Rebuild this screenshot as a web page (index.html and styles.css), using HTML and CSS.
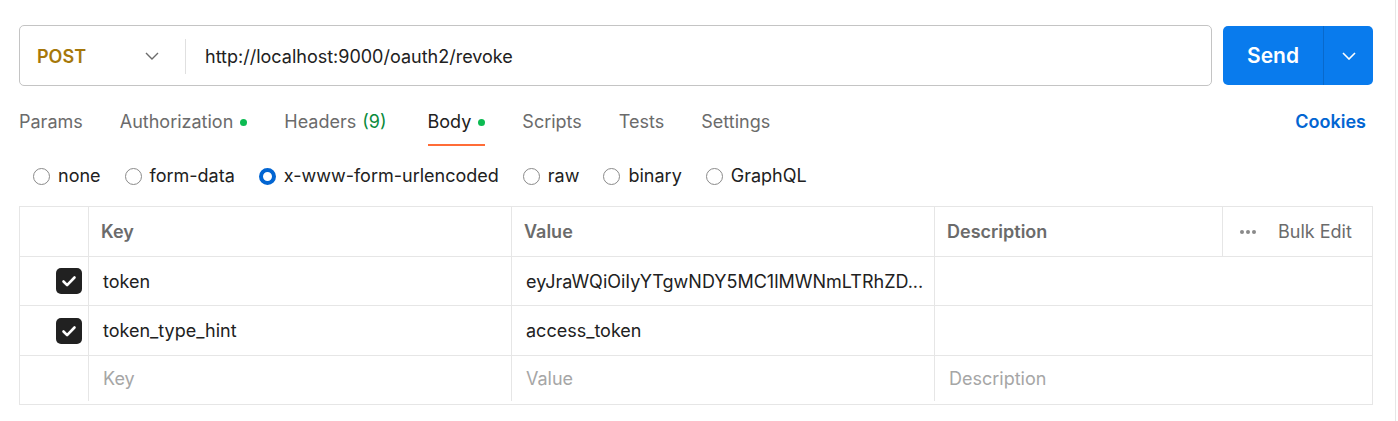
FILE: index.html
```html
<!DOCTYPE html>
<html lang="en">
<head>
<meta charset="utf-8">
<title>Request</title>
<link rel="stylesheet" href="styles.css">
</head>
<body>
<div class="page">
  <div class="request-bar">
    <div class="url-box">
      <div class="method">
        <span class="method-name">POST</span>
        <svg class="chev" width="14" height="8" viewBox="0 0 14 8"><path d="M1 1l6 6 6-6" fill="none" stroke="#6b6b6b" stroke-width="1.4"/></svg>
      </div>
      <div class="url">http://localhost:9000/oauth2/revoke</div>
    </div>
    <div class="send">
      <span class="send-label">Send</span>
      <span class="send-more"><svg width="14" height="8" viewBox="0 0 14 8"><path d="M1 1l6 6 6-6" fill="none" stroke="#fff" stroke-width="1.6"/></svg></span>
    </div>
  </div>

  <div class="tabs">
    <div class="tab">Params</div>
    <div class="tab">Authorization<span class="dot"></span></div>
    <div class="tab wide">Headers <span class="count">(9)</span></div>
    <div class="tab active">Body<span class="dot"></span></div>
    <div class="tab">Scripts</div>
    <div class="tab">Tests</div>
    <div class="tab">Settings</div>
    <div class="cookies">Cookies</div>
  </div>

  <div class="radios">
    <label class="radio"><span class="circle"></span>none</label>
    <label class="radio"><span class="circle"></span>form-data</label>
    <label class="radio"><span class="circle on"></span>x-www-form-urlencoded</label>
    <label class="radio"><span class="circle"></span>raw</label>
    <label class="radio"><span class="circle"></span>binary</label>
    <label class="radio"><span class="circle"></span>GraphQL</label>
  </div>

  <div class="table">
    <div class="row head">
      <div class="cell"></div>
      <div class="cell th">Key</div>
      <div class="cell th">Value</div>
      <div class="cell th">Description</div>
      <div class="cell bulk"><span class="dots"><i></i><i></i><i></i></span>Bulk Edit</div>
    </div>
    <div class="row r1">
      <div class="cell check"><span class="box"><svg width="20" height="20" viewBox="0 0 20 20"><path d="M4.5 10.5l3.6 3.6 7.4-7.6" fill="none" stroke="#fff" stroke-width="2.6" stroke-linecap="round" stroke-linejoin="round"/></svg></span></div>
      <div class="cell td">token</div>
      <div class="cell td">eyJraWQiOiIyYTgwNDY5MC1lMWNmLTRhZD...</div>
      <div class="cell td"></div>
    </div>
    <div class="row r2">
      <div class="cell check"><span class="box"><svg width="20" height="20" viewBox="0 0 20 20"><path d="M4.5 10.5l3.6 3.6 7.4-7.6" fill="none" stroke="#fff" stroke-width="2.6" stroke-linecap="round" stroke-linejoin="round"/></svg></span></div>
      <div class="cell td">token_type_hint</div>
      <div class="cell td">access_token</div>
      <div class="cell td"></div>
    </div>
    <div class="row r3">
      <div class="cell"></div>
      <div class="cell td ph">Key</div>
      <div class="cell td ph">Value</div>
      <div class="cell td ph">Description</div>
    </div>
  </div>
</div>
</body>
</html>
```

FILE: styles.css
```css
* { box-sizing: border-box; }
html, body { margin: 0; padding: 0; background: #fff; }
body {
  font-family: Inter, "Noto Sans", sans-serif;
  color: #212121;
  font-size: 18px;
}
.page {
  width: 1396px;
  height: 421px;
  border-right: 1px solid #e6e6e6;
  padding: 25px 22px 0 19px;
}
.request-bar {
  display: flex;
  gap: 11px;
  align-items: flex-start;
}
.url-box {
  flex: 1;
  height: 61px;
  border: 1px solid #c4c4c4;
  border-radius: 5px;
  display: flex;
  align-items: center;
  padding-top: 1px;
}
.method {
  width: 166px;
  height: 35px;
  border-right: 1px solid #e0e0e0;
  display: flex;
  align-items: center;
  justify-content: space-between;
  padding: 0 26px 0 17px;
}
.method-name {
  color: #a6780a;
  font-weight: 600;
}
.chev { display: block; }
.url {
  padding-left: 19px;
  color: #212121;
}
.send {
  width: 150px;
  height: 59px;
  margin-top: 1px;
  background: #097bed;
  border-radius: 5px;
  display: flex;
  color: #fff;
}
.send-label {
  width: 101px;
  display: flex;
  align-items: center;
  justify-content: center;
  font-weight: 600;
  font-size: 21px;
  border-right: 1px solid #0869cc;
}
.send-more {
  flex: 1;
  display: flex;
  align-items: center;
  justify-content: center;
}
.send-more svg { display: block; }

.tabs {
  display: flex;
  margin-top: 18px;
  gap: 37px;
  align-items: flex-start;
}
.tab {
  padding: 6px 0 10px;
  line-height: 24px;
  color: #6b6b6b;
  border-bottom: 2px solid transparent;
  display: flex;
  align-items: center;
  white-space: nowrap;
}
.tab.wide { margin-right: 4px; }
.tab.active {
  color: #212121;
  border-bottom-color: #ff6c37;
}
.count { color: #0a8a3c; margin-left: 6px; }
.dot {
  width: 7px;
  height: 7px;
  border-radius: 50%;
  background: #0cbb52;
  margin-left: 7px;
}
.cookies {
  margin-left: auto;
  padding: 6px 7px 0 0;
  line-height: 24px;
  color: #0265d2;
  font-weight: 600;
}

.radios {
  display: flex;
  gap: 24px;
  margin-top: 18px;
  padding-left: 14px;
  line-height: 24px;
}
.radio {
  display: flex;
  align-items: center;
  gap: 8px;
  color: #212121;
}
.circle {
  width: 17px;
  height: 17px;
  border: 1px solid #8a8a8a;
  border-radius: 50%;
}
.circle.on {
  border: 4.5px solid #0265d2;
}

.table {
  margin-top: 18px;
  width: 1354px;
  border: 1px solid #e6e6e6;
}
.row {
  display: grid;
  grid-template-columns: 68px 423px 423px 1fr;
  border-top: 1px solid #e6e6e6;
  height: 49px;
}
.row.head {
  border-top: none;
  height: 49px;
  grid-template-columns: 68px 423px 423px 288px 1fr;
}
.row.r1 { height: 49px; }
.row.r2 { height: 50px; }
.row.r3 { height: 49px; padding-bottom: 3px; }
.cell {
  display: flex;
  align-items: center;
  border-left: 1px solid #e6e6e6;
  white-space: nowrap;
  overflow: hidden;
  min-width: 0;
}
.cell:first-child { border-left: none; }
.th {
  padding-left: 12px;
  font-weight: 600;
  color: #6b6b6b;
}
.td {
  padding-left: 14px;
  color: #212121;
}
.td.ph { color: #a6a6a6; }
.bulk {
  color: #6b6b6b;
  padding-left: 17px;
}
.dots {
  display: flex;
  gap: 2px;
  margin-right: 22px;
}
.dots i {
  width: 4px;
  height: 4px;
  border-radius: 50%;
  background: #8a8a8a;
}
.check {
  justify-content: flex-end;
  padding-right: 6px;
}
.box {
  width: 26px;
  height: 26px;
  border-radius: 5px;
  background: #212121;
  display: flex;
  align-items: center;
  justify-content: center;
}
.box svg { display: block; }
```
